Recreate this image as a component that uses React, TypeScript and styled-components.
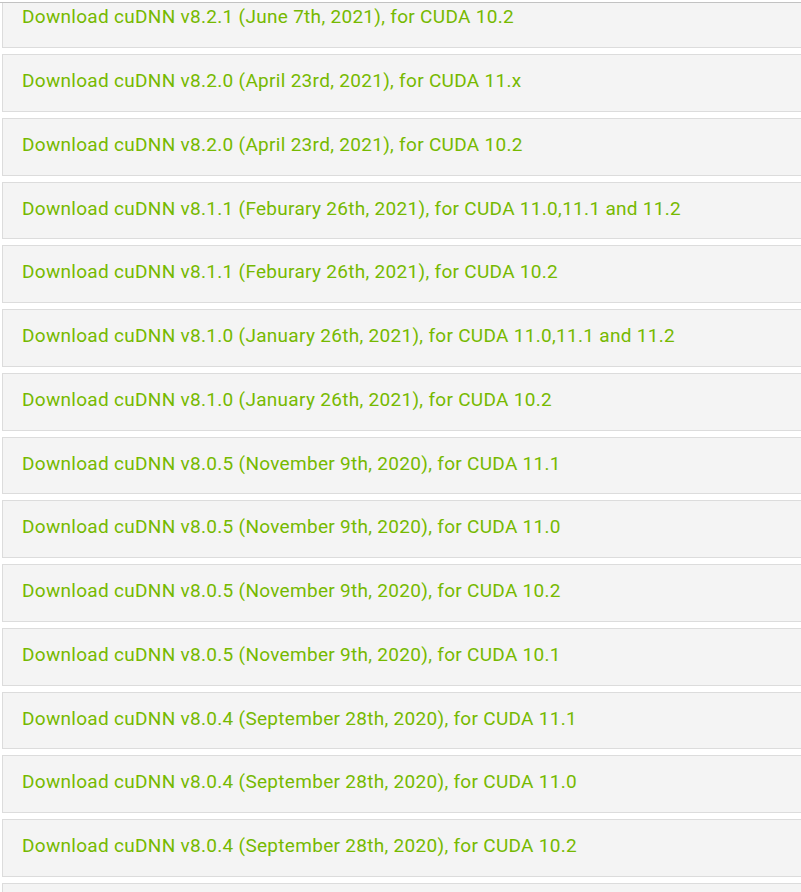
import React from 'react';
import styled, { createGlobalStyle } from 'styled-components';

const GlobalStyle = createGlobalStyle`
    html, body {
        margin: 0;
        padding: 0;
        background: #ffffff;
        overflow: hidden;
    }
    body {
        font-family: Roboto, "Liberation Sans", sans-serif;
    }
`

const Page = styled.div`
    width: 801px;
    height: 892px;
    overflow: hidden;
    background: #ffffff;
    padding-top: 2px;
    box-sizing: border-box;
`

const TopRule = styled.div`
    height: 1px;
    background: #c2c2c2;
`

const List = styled.div`
    display: flex;
    flex-direction: column;
    gap: 6px;
    padding-left: 2px;
    width: 820px;
`

const Row = styled.a<{ $clipped?: boolean }>`
    display: block;
    box-sizing: border-box;
    height: ${p => (p.$clipped ? '45px' : '57.75px')};
    flex-shrink: 0;
    padding: 0 19px;
    background: #f4f4f4;
    border: 1px solid #dcdcdc;
    border-top: ${p => (p.$clipped ? 'none' : '1px solid #dcdcdc')};
    line-height: ${p => (p.$clipped ? '27px' : '51px')};
    font-size: 19px;
    letter-spacing: 0.3px;
    color: #76b900;
    text-decoration: none;
    white-space: nowrap;
    cursor: pointer;
`

const downloads = [
    'v8.2.1 (June 7th, 2021), for CUDA 10.2',
    'v8.2.0 (April 23rd, 2021), for CUDA 11.x',
    'v8.2.0 (April 23rd, 2021), for CUDA 10.2',
    'v8.1.1 (Feburary 26th, 2021), for CUDA 11.0,11.1 and 11.2',
    'v8.1.1 (Feburary 26th, 2021), for CUDA 10.2',
    'v8.1.0 (January 26th, 2021), for CUDA 11.0,11.1 and 11.2',
    'v8.1.0 (January 26th, 2021), for CUDA 10.2',
    'v8.0.5 (November 9th, 2020), for CUDA 11.1',
    'v8.0.5 (November 9th, 2020), for CUDA 11.0',
    'v8.0.5 (November 9th, 2020), for CUDA 10.2',
    'v8.0.5 (November 9th, 2020), for CUDA 10.1',
    'v8.0.4 (September 28th, 2020), for CUDA 11.1',
    'v8.0.4 (September 28th, 2020), for CUDA 11.0',
    'v8.0.4 (September 28th, 2020), for CUDA 10.2',
]

export default function App() {
    return (
        <>
            <GlobalStyle />
            <Page>
                <TopRule />
                <List>
                    {downloads.map((d, i) => (
                        <Row key={d + i} $clipped={i === 0}>
                            Download cuDNN {d}
                        </Row>
                    ))}
                    {/* next row starts just at the bottom edge, its text is below the fold */}
                    <Row />
                </List>
            </Page>
        </>
    )
}
